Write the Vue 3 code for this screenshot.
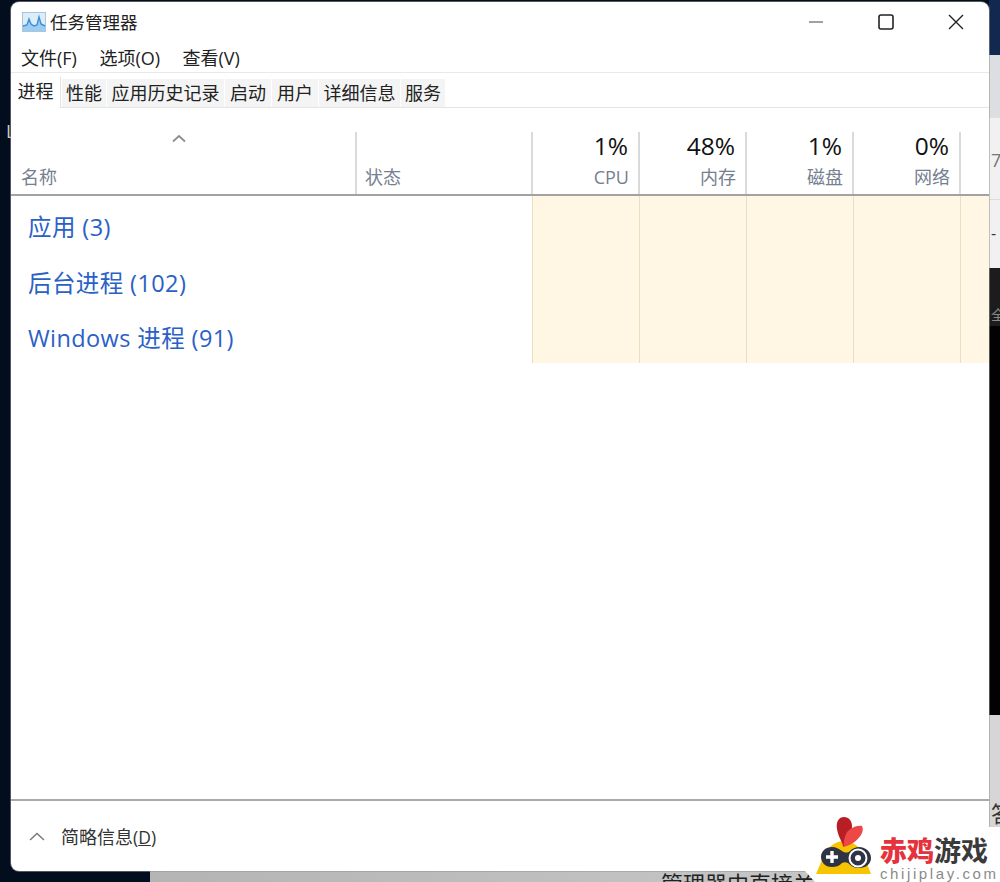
<script setup>
const menus = ['文件(F)', '选项(O)', '查看(V)']
const tabs = [
  { label: '进程', w: 50 },
  { label: '性能', w: 44 },
  { label: '应用历史记录', w: 117 },
  { label: '启动', w: 46 },
  { label: '用户', w: 46 },
  { label: '详细信息', w: 81 },
  { label: '服务', w: 44 },
]
const stats = [
  { pct: '1%', name: 'CPU' },
  { pct: '48%', name: '内存' },
  { pct: '1%', name: '磁盘' },
  { pct: '0%', name: '网络' },
]
const groups = ['应用 (3)', '后台进程 (102)', 'Windows 进程 (91)']
</script>

<template>
  <div class="desktop">
    <!-- 窗口后面露出来的桌面和其他窗口 -->
    <div class="back-right">
      <div class="br navy"></div>
      <div class="br grey"></div>
      <div class="br pale one"><span>7</span></div>
      <div class="br pale two"><span>-</span></div>
      <div class="br dark"><span>全</span></div>
      <div class="br black"></div>
      <div class="br soft"><span>答</span></div>
    </div>
    <div class="back-bottom"><span>管理器中直接关</span></div>
    <span class="back-l">L</span>

    <div class="window">
      <div class="titlebar">
        <svg class="app-icon" width="24" height="20" viewBox="0 0 24 20">
          <rect x="0.5" y="0.5" width="23" height="19" fill="#dcecf8" stroke="#a9c6de" />
          <path d="M1 19V14L5 13L7 7L9 12L12 14L15 13L17 5L19 12L23 14V19Z" fill="#9ccdf0" />
          <path d="M1 14L5 13L7 7L9 12L12 14L15 13L17 5L19 12L23 14" fill="none" stroke="#3d8fd6" stroke-width="1.4" />
        </svg>
        <span class="title">任务管理器</span>
        <div class="controls">
          <svg width="16" height="16" viewBox="0 0 16 16"><path d="M1 8H15" stroke="#444" stroke-width="1.2" /></svg>
          <svg width="16" height="16" viewBox="0 0 16 16"><rect x="1" y="1" width="14" height="14" rx="2" fill="none" stroke="#222" stroke-width="1.6" /></svg>
          <svg width="16" height="16" viewBox="0 0 16 16"><path d="M1 1L15 15M15 1L1 15" stroke="#222" stroke-width="1.4" /></svg>
        </div>
      </div>

      <div class="menubar">
        <span v-for="m in menus" :key="m">{{ m }}</span>
      </div>

      <div class="tabstrip">
        <div
          v-for="(t, i) in tabs"
          :key="t.label"
          class="tab"
          :class="{ active: i === 0 }"
          :style="{ width: t.w + 'px' }"
        >{{ t.label }}</div>
      </div>

      <div class="table-head cols">
        <div class="hcell name">
          <svg class="sort" width="16" height="9" viewBox="0 0 16 9"><path d="M2 7.5L8 2L14 7.5" fill="none" stroke="#8a8f96" stroke-width="1.8" /></svg>
          <span class="hlabel">名称</span>
        </div>
        <div class="hcell status"><span class="hlabel">状态</span></div>
        <div v-for="s in stats" :key="s.name" class="hcell stat">
          <span class="pct">{{ s.pct }}</span>
          <span class="hlabel">{{ s.name }}</span>
        </div>
        <div class="hcell rest"></div>
      </div>

      <div class="table-body">
        <div v-for="g in groups" :key="g" class="row cols">
          <div class="group">{{ g }}</div>
          <div v-for="n in 5" :key="n" class="heat"></div>
        </div>
      </div>

      <div class="footer">
        <svg width="16" height="9" viewBox="0 0 16 9"><path d="M1 8L8 1.5L15 8" fill="none" stroke="#777" stroke-width="1.4" /></svg>
        <span class="less">简略信息<small>(<u>D</u>)</small></span>
      </div>
    </div>

    <!-- 右下角水印 -->
    <div class="brand">
      <svg class="brand-logo" width="56" height="60" viewBox="0 0 56 60">
        <path d="M0 58L9 37C14 29 21 25 28 25C36 25 43 30 47 37L55 58Z" fill="#f8c400" />
        <path d="M28 1C22 1 20 7 21 13C22 21 27 26 27 31C33 26 36 18 36 10C36 5 33 1 28 1Z" fill="#b81f24" />
        <path d="M46 10C41 9 33 12 30 18C28 23 27 28 28 31C35 29 43 24 46 17C47 14 47 12 46 10Z" fill="#ee4747" />
        <path d="M16 31C20 31 23 33 26 35C29 37 32 37 34 35C37 32 40 31 43 31C50 31 55 36 55 42C55 48 50 52 43 52C38 52 35 50 32 47C30 46 28 46 26 47C23 50 20 51 16 51C9 51 5 46 5 41C5 35 10 31 16 31Z" fill="#2f3444" />
        <path d="M16 35V47M10 41H22" stroke="#fff" stroke-width="3.4" />
        <circle cx="42" cy="42" r="8.5" fill="none" stroke="#fff" stroke-width="2" />
        <circle cx="42" cy="42" r="3" fill="#fff" />
      </svg>
      <div class="brand-text">
        <div class="brand-cn"><b>赤鸡</b>游戏</div>
        <div class="brand-en">chijiplay.com</div>
      </div>
    </div>
  </div>
</template>

<style scoped>
.desktop {
  position: relative;
  width: 1000px;
  height: 882px;
  overflow: hidden;
  background: #020d1e;
  font-family: "Open Sans", "Noto Sans CJK SC", sans-serif;
}

.back-right {
  position: absolute;
  top: 0;
  right: 0;
  width: 11px;
  height: 882px;
  display: flex;
  flex-direction: column;
}
.br {
  position: relative;
  overflow: hidden;
}
.br span {
  position: absolute;
  left: 2px;
  white-space: nowrap;
}
.navy { height: 55px; background: #12294f; }
.grey { height: 63px; background: #dcdee2; }
.pale { background: #f1f1f1; }
.one { height: 82px; border-bottom: 1px solid #dcdcdc; box-sizing: border-box; }
.one span { top: 30px; font-size: 18px; color: #777; }
.two { height: 68px; }
.two span { top: 22px; font-size: 16px; color: #333; }
.dark { height: 58px; background: #1c1c1c; }
.dark span { top: 36px; font-size: 14px; color: #888; }
.black { height: 389px; background: #020202; }
.soft { flex: 1; background: #d6d6d6; }
.soft span { top: 81px; font-size: 22px; color: #333; }

.back-bottom {
  position: absolute;
  left: 150px;
  right: 0;
  top: 871px;
  height: 11px;
  background: linear-gradient(90deg, #b4b4b4, #cbcbcb);
  overflow: hidden;
}
.back-bottom span {
  position: absolute;
  left: 511px;
  top: -1px;
  font-size: 22px;
  line-height: 26px;
  color: #222;
  white-space: nowrap;
}
.back-l {
  position: absolute;
  left: 6px;
  top: 119px;
  font-size: 18px;
  color: #ccc;
}

.window {
  position: absolute;
  left: 11px;
  top: 2px;
  width: 978px;
  height: 869px;
  display: flex;
  flex-direction: column;
  background: #fff;
  border-radius: 8px;
  box-shadow: 0 0 0 1px rgba(150, 150, 150, 0.55);
  overflow: hidden;
}

.titlebar {
  height: 39px;
  display: flex;
  align-items: center;
  padding-left: 11px;
  color: #222;
}
.app-icon {
  margin-right: 4px;
}
.title {
  font-size: 17.5px;
}
.controls {
  margin-left: auto;
  display: flex;
  gap: 54px;
  padding-right: 25px;
}

.menubar {
  height: 31px;
  display: flex;
  align-items: center;
  gap: 22.5px;
  padding-left: 10px;
  font-size: 18px;
  color: #222;
  border-bottom: 1px solid #e9e9e9;
}

.tabstrip {
  height: 34px;
  display: flex;
  align-items: flex-end;
  gap: 1px;
  border-bottom: 1px solid #e4e4e4;
}
.tab {
  height: 28px;
  line-height: 28px;
  text-align: center;
  font-size: 18px;
  color: #222;
  background: #f4f4f4;
  white-space: nowrap;
}
.tab.active {
  height: 31px;
  line-height: 28px;
  background: #fff;
  margin-bottom: -1px;
  border-right: 1px solid #e4e4e4;
  box-sizing: border-box;
}

.cols {
  display: grid;
  grid-template-columns: 346px 176px 107px 107px 107px 107px 28px;
}

.table-head {
  margin-top: 24px;
  height: 62px;
  grid-template-rows: 62px;
  border-bottom: 2px solid #a2a2a2;
  box-sizing: content-box;
}
.hcell {
  position: relative;
  display: flex;
  flex-direction: column;
  justify-content: flex-end;
  border-right: 2px solid #dadada;
  box-sizing: border-box;
  padding-bottom: 5px;
}
.hcell.rest {
  border-right: none;
}
.name {
  padding-left: 10px;
}
.status {
  padding-left: 8px;
}
.stat {
  align-items: flex-end;
  padding-right: 9px;
}
.sort {
  position: absolute;
  left: 160px;
  top: 2px;
}
.hlabel {
  font-size: 18px;
  line-height: 24px;
  color: #75808f;
}
.pct {
  font-size: 24.5px;
  line-height: 28px;
  margin-bottom: 5px;
  margin-right: 1px;
  color: #111;
}

.table-body {
  flex: 1;
}
.row {
  height: 55.67px;
}
.group {
  grid-column: 1 / span 2;
  padding-left: 17px;
  padding-top: 8px;
  line-height: 47px;
  font-size: 23.5px;
  letter-spacing: 0.4px;
  color: #2b61c6;
  white-space: nowrap;
}
.heat {
  background: #fff7e3;
  border-right: 1px solid #eadfc0;
  box-sizing: border-box;
}
.group + .heat {
  margin-left: -1px;
  border-left: 1px solid #eadfc0;
}
.heat:last-child {
  border-right: none;
}

.footer {
  height: 72px;
  display: flex;
  align-items: center;
  gap: 16px;
  padding-left: 18px;
  box-sizing: border-box;
  border-top: 2px solid #aaaaaa;
}
.less {
  font-size: 18px;
  color: #333;
}
.less small {
  font-size: 17.5px;
}

.brand {
  position: absolute;
  right: 0;
  bottom: 0;
  width: 190px;
  height: 67px;
  display: flex;
  align-items: flex-end;
  gap: 8px;
  padding-left: 6px;
  box-sizing: border-box;
}
.brand::before {
  content: "";
  position: absolute;
  left: -5px;
  right: 0;
  bottom: 0;
  height: 55px;
  background: #fff;
  clip-path: polygon(0 44px, 0 0, 100% 0, 100% 100%, 10px 100%);
}
.brand-logo {
  position: relative;
  flex: none;
  margin-bottom: 6px;
}
.brand-text {
  position: relative;
  margin-bottom: 0;
}
.brand-cn {
  font-size: 27px;
  line-height: 30px;
  font-weight: 700;
  color: #3a3a3a;
  white-space: nowrap;
}
.brand-cn b {
  color: #e6323c;
}
.brand-en {
  font-family: "Liberation Sans", sans-serif;
  font-size: 15px;
  line-height: 16px;
  letter-spacing: 2.6px;
  color: #8a8a8a;
  white-space: nowrap;
}
</style>
